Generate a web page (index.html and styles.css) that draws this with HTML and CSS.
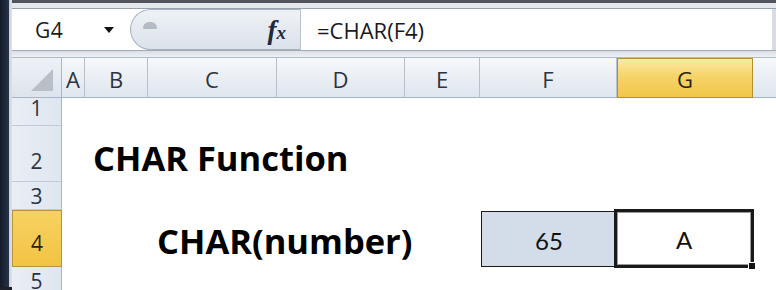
FILE: index.html
```html
<!DOCTYPE html>
<html>
<head>
<meta charset="utf-8">
<link rel="stylesheet" href="styles.css">
</head>
<body>
<div class="frame">
  <div class="edge"></div>
  <div class="main">
    <div class="topband"></div>
    <div class="fbar">
      <div class="namebox">
        <span class="ref">G4</span>
        <span class="caret"></span>
      </div>
      <div class="pill">
        <span class="blob"></span>
        <span class="fx">f<span class="fx-x">x</span></span>
      </div>
      <div class="formula">=CHAR(F4)</div>
      <div class="fbar-end"></div>
    </div>
    <div class="gapband"></div>
    <div class="grid">
      <div class="corner">
        <svg class="corner-tri" width="22" height="22" viewBox="0 0 22 22"><polygon points="22,0 22,22 0,22" fill="#b9bfc7"/></svg>
      </div>
      <div class="ch">A</div>
      <div class="ch">B</div>
      <div class="ch">C</div>
      <div class="ch">D</div>
      <div class="ch">E</div>
      <div class="ch">F</div>
      <div class="ch ch-sel">G</div>
      <div class="ch ch-rest"></div>

      <div class="rh r1">1</div>
      <div class="rh r2">2</div>
      <div class="rh r3">3</div>
      <div class="rh r4 rh-sel">4</div>
      <div class="rh r5">5</div>

      <div class="title">CHAR Function</div>
      <div class="label">CHAR(number)</div>
      <div class="cell-f4">65</div>
      <div class="cell-g4">A<span class="handle"></span></div>
    </div>
  </div>
</div>
</body>
</html>
```

FILE: styles.css
```css
html, body {
  margin: 0;
  padding: 0;
}
body {
  width: 776px;
  height: 290px;
  overflow: hidden;
  background: #ffffff;
  font-family: "Open Sans", "Liberation Sans", sans-serif;
}
.frame {
  display: flex;
  width: 776px;
  height: 290px;
  box-sizing: border-box;
  border-bottom: 3px solid #1e2228;
}
.edge {
  width: 12px;
  flex: none;
  background: linear-gradient(to right, #141b28 0, #26334a 9px, #c8cfd8 9px, #dfe4ea 12px);
}
.main {
  flex: 1;
  display: flex;
  flex-direction: column;
  min-width: 0;
}
.topband {
  height: 9px;
  box-sizing: border-box;
  border-top: 3px solid #50555d;
  border-bottom: 1px solid #98a3b0;
  background: #e4e8ed;
  flex: none;
}
.fbar {
  height: 42px;
  flex: none;
  box-sizing: border-box;
  border-bottom: 1px solid #a2acb8;
  display: flex;
  background: #ffffff;
}
.namebox {
  width: 118px;
  flex: none;
  display: flex;
  align-items: center;
  position: relative;
  padding-left: 23px;
  box-sizing: border-box;
}
.ref {
  font-size: 21px;
  color: #1a1a1a;
  letter-spacing: 0.5px;
}
.caret {
  position: absolute;
  left: 92px;
  top: 18px;
  width: 0;
  height: 0;
  border-left: 5px solid transparent;
  border-right: 5px solid transparent;
  border-top: 6px solid #111;
}
.pill {
  width: 170px;
  flex: none;
  box-sizing: border-box;
  border: 1px solid #a6b1be;
  border-right: none;
  border-radius: 22px 0 0 22px;
  background: linear-gradient(#eef2f6, #dbe2ea);
  position: relative;
  display: flex;
  align-items: center;
  justify-content: flex-end;
  padding-right: 14px;
}
.blob {
  position: absolute;
  left: 12px;
  top: 12px;
  width: 14px;
  height: 7px;
  border-radius: 6px 6px 1px 1px;
  background: #b3bbc5;
}
.fx {
  font-family: "Liberation Serif", "DejaVu Serif", serif;
  font-style: italic;
  font-weight: bold;
  font-size: 27px;
  color: #1f2a3c;
  line-height: 1;
  margin-top: 2px;
}
.fx-x {
  font-size: 19px;
}
.formula {
  flex: 1;
  border-left: 1px solid #b9c2cd;
  padding-left: 16px;
  display: flex;
  align-items: center;
  font-size: 22px;
  color: #1a1a1a;
}
.fbar-end {
  width: 4px;
  flex: none;
  background: #d8dde3;
}
.gapband {
  height: 7px;
  flex: none;
  box-sizing: border-box;
  background: linear-gradient(#d9dfe6, #eef1f5);
  border-bottom: 1px solid #b1bac5;
}
.grid {
  flex: 1;
  display: grid;
  grid-template-columns: 50px 23px 63px 129px 128px 75px 137px 136px 1fr;
  grid-template-rows: 40px 28px 56px 28px 57px 1fr;
  background: #ffffff;
  position: relative;
}
.corner {
  grid-row: 1;
  grid-column: 1;
  background: linear-gradient(#eef2f7, #dde4ec);
  border-right: 1px solid #a8b7c7;
  border-bottom: 1px solid #a8b7c7;
  box-sizing: border-box;
  display: flex;
  align-items: flex-end;
  justify-content: flex-end;
  padding: 0 8px 6px 0;
}
.ch {
  grid-row: 1;
  background: linear-gradient(#f6f8fb, #dfe6ee);
  border-right: 1px solid #b6c1ce;
  border-bottom: 1px solid #a3b3c4;
  box-sizing: border-box;
  display: flex;
  align-items: center;
  justify-content: center;
  font-size: 22px;
  color: #2b3440;
  padding-top: 2px;
}
.ch-sel {
  background: linear-gradient(#fbe9a6, #f6d469 45%, #f1c64a);
  border: 1px solid #b58f33;
  color: #2a2410;
}
.ch-rest {
  border-right: none;
}
.rh {
  grid-column: 1;
  background: linear-gradient(to right, #e9eef5, #dfe6ef);
  border-right: 1px solid #a8b7c7;
  border-bottom: 1px solid #bfcad6;
  box-sizing: border-box;
  display: flex;
  align-items: flex-end;
  justify-content: center;
  font-size: 21px;
  line-height: 1;
  color: #2b3440;
  padding-bottom: 6px;
}
.r1 { grid-row: 2; }
.r2 { grid-row: 3; padding-bottom: 9px; }
.r3 { grid-row: 4; padding-bottom: 2px; }
.r4 { grid-row: 5; padding-bottom: 12px; }
.r5 { grid-row: 6; align-items: flex-start; padding-top: 4px; }
.rh-sel {
  background: linear-gradient(#f7d160, #f2c445);
  border: 1px solid #b9923a;
  color: #2a2410;
}
.title {
  grid-row: 3;
  grid-column: 3 / 8;
  align-self: end;
  padding-left: 8px;
  padding-bottom: 7px;
  font-family: "Open Sans", "Liberation Sans", sans-serif;
  font-weight: bold;
  font-size: 34.5px;
  line-height: 1;
  color: #000;
  white-space: nowrap;
}
.label {
  grid-row: 5;
  grid-column: 4 / 7;
  align-self: end;
  padding-left: 9px;
  padding-bottom: 9px;
  font-family: "Open Sans", "Liberation Sans", sans-serif;
  font-weight: bold;
  font-size: 34.5px;
  line-height: 1;
  color: #000;
  white-space: nowrap;
}
.cell-f4 {
  grid-row: 5;
  grid-column: 7;
  margin: 1px 0 0 1px;
  background: #d3dde9;
  border: 1px solid #1a1a1a;
  box-sizing: border-box;
  display: flex;
  align-items: center;
  justify-content: center;
  font-family: "Lato", "Liberation Sans", sans-serif;
  font-size: 24px;
  color: #111;
  padding-top: 2px;
}
.cell-g4 {
  grid-row: 5;
  grid-column: 8;
  margin: -1px -1px -1px -3px;
  background: #ffffff;
  border: 3px solid #1a1a1a;
  box-shadow: inset 0 0 0 1px #9a9a9a;
  box-sizing: border-box;
  display: flex;
  align-items: center;
  justify-content: center;
  font-family: "Lato", "Liberation Sans", sans-serif;
  font-size: 24px;
  color: #111;
  position: relative;
  padding-top: 2px;
}
.handle {
  position: absolute;
  right: -5px;
  bottom: -5px;
  width: 6px;
  height: 6px;
  background: #111;
  border: 1px solid #fff;
}
```
